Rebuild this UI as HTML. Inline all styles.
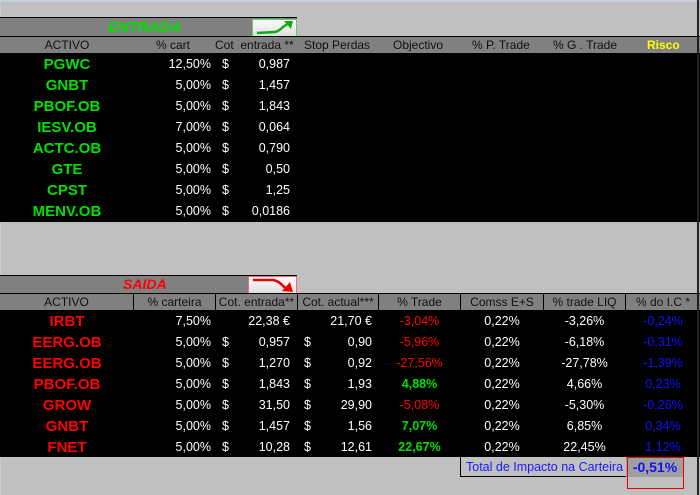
<!DOCTYPE html>
<html><head><meta charset="utf-8"><style>
*{margin:0;padding:0;box-sizing:border-box}
body{width:700px;height:495px;background:#c0c0c0;position:relative;overflow:hidden;font-family:"Liberation Sans",Arial,sans-serif;font-size:12.5px;color:#fff}
div,span{position:absolute}
.r{height:21px;left:0;width:700px;line-height:21px}
.n{font-weight:bold;font-size:15px;width:134px;text-align:center;left:0}
.g{color:#00e000}.rd{color:#f00}.b{color:#1010ff}.w{color:#fff}
.h{color:#111;font-size:12px;line-height:17px}
.R{text-align:right}.C{text-align:center}
</style></head><body>
<div style="left:0;top:0;width:700px;height:2px;background:#c8cce0"></div>
<div style="left:0;top:0;width:1px;height:495px;background:#c8cce0"></div>
<!-- ENTRADA -->
<div style="left:0;top:17px;width:297px;height:20px;background:#808080;border-top:1px solid #000"></div>
<div style="left:108px;top:18px;font-size:15px;font-weight:bold;font-style:italic;color:#00e000;line-height:19px">ENTRADA</div>
<div style="left:252px;top:19px;width:45px;height:18px;background:linear-gradient(#fff,#ddd);border:1px solid #6c6"><svg width="43" height="16" viewBox="0 0 43 16"><path d="M4 13 L22 12 Q26 11 30 7 L36 3" stroke="#1a1" stroke-width="2.5" fill="none"/><path d="M31 1 L40 1 L38 9 Z" fill="#1a1"/></svg></div>
<div style="left:0;top:36px;width:700px;height:17px;background:#808080;border-top:1px solid #000"></div>
<div class="h" style="left:0;top:37px;width:134px;text-align:center">ACTIVO</div>
<div class="h" style="left:156px;top:37px">% cart</div>
<div class="h" style="left:215px;top:37px">Cot&nbsp; entrada **</div>
<div class="h" style="left:304px;top:37px">Stop Perdas</div>
<div class="h" style="left:393px;top:37px">Objectivo</div>
<div class="h" style="left:472px;top:37px">% P. Trade</div>
<div class="h" style="left:553px;top:37px">% G . Trade</div>
<div class="h" style="left:647px;top:37px;color:#ff0;font-weight:bold">Risco</div>
<div style="left:0;top:53px;width:700px;height:169px;background:#000"></div>
<div class="r" style="top:54px"><span class="n g">PGWC</span><span class="R" style="right:489px">12,50%</span><span style="left:222px">$</span><span class="R" style="right:410px">0,987</span></div>
<div class="r" style="top:75px"><span class="n g">GNBT</span><span class="R" style="right:489px">5,00%</span><span style="left:222px">$</span><span class="R" style="right:410px">1,457</span></div>
<div class="r" style="top:96px"><span class="n g">PBOF.OB</span><span class="R" style="right:489px">5,00%</span><span style="left:222px">$</span><span class="R" style="right:410px">1,843</span></div>
<div class="r" style="top:117px"><span class="n g">IESV.OB</span><span class="R" style="right:489px">7,00%</span><span style="left:222px">$</span><span class="R" style="right:410px">0,064</span></div>
<div class="r" style="top:138px"><span class="n g">ACTC.OB</span><span class="R" style="right:489px">5,00%</span><span style="left:222px">$</span><span class="R" style="right:410px">0,790</span></div>
<div class="r" style="top:159px"><span class="n g">GTE</span><span class="R" style="right:489px">5,00%</span><span style="left:222px">$</span><span class="R" style="right:410px">0,50</span></div>
<div class="r" style="top:180px"><span class="n g">CPST</span><span class="R" style="right:489px">5,00%</span><span style="left:222px">$</span><span class="R" style="right:410px">1,25</span></div>
<div class="r" style="top:201px"><span class="n g">MENV.OB</span><span class="R" style="right:489px">5,00%</span><span style="left:222px">$</span><span class="R" style="right:410px">0,0186</span></div>
<!-- SAIDA -->
<div style="left:0;top:275px;width:297px;height:19px;background:#808080;border-top:1px solid #000"></div>
<div style="left:123px;top:276px;font-size:14px;font-weight:bold;font-style:italic;color:#f00;line-height:17px">SAIDA</div>
<div style="left:248px;top:276px;width:49px;height:18px;background:linear-gradient(#fff,#ddd);border:1px solid #f66"><svg width="47" height="16" viewBox="0 0 47 16"><path d="M4 3 L24 3 Q30 4 34 9 L38 12" stroke="#e00" stroke-width="2.5" fill="none"/><path d="M33 14 L44 15 L41 5 Z" fill="#e00"/></svg></div>
<div style="left:0;top:293px;width:700px;height:17px;background:#808080;border-top:1px solid #000"></div>
<div style="left:133px;top:293px;width:1px;height:17px;background:#000"></div>
<div style="left:215px;top:293px;width:1px;height:17px;background:#000"></div>
<div style="left:297px;top:293px;width:1px;height:17px;background:#000"></div>
<div style="left:378px;top:293px;width:1px;height:17px;background:#000"></div>
<div style="left:460px;top:293px;width:1px;height:17px;background:#000"></div>
<div style="left:543px;top:293px;width:1px;height:17px;background:#000"></div>
<div style="left:625px;top:293px;width:1px;height:17px;background:#000"></div>
<div class="h C" style="left:0;top:294px;width:133px">ACTIVO</div>
<div class="h C" style="left:134px;top:294px;width:81px">% carteira</div>
<div class="h C" style="left:216px;top:294px;width:81px">Cot. entrada**</div>
<div class="h C" style="left:298px;top:294px;width:80px">Cot. actual***</div>
<div class="h C" style="left:379px;top:294px;width:81px">% Trade</div>
<div class="h C" style="left:461px;top:294px;width:82px">Comss E+S</div>
<div class="h C" style="left:544px;top:294px;width:81px">% trade LIQ</div>
<div class="h C" style="left:626px;top:294px;width:74px">% do I.C *</div>
<div style="left:0;top:310px;width:700px;height:147px;background:#000"></div>
<div class="r" style="top:311px"><span class="n rd">IRBT</span><span class="R" style="right:489px">7,50%</span><span class="R" style="right:410px">22,38 €</span><span class="R" style="right:328px">21,70 €</span><span class="rd C" style="left:379px;width:81px">-3,04%</span><span class="C" style="left:461px;width:82px">0,22%</span><span class="C" style="left:544px;width:81px">-3,26%</span><span class="b C" style="left:626px;width:74px">-0,24%</span></div>
<div class="r" style="top:332px"><span class="n rd">EERG.OB</span><span class="R" style="right:489px">5,00%</span><span style="left:222px">$</span><span class="R" style="right:410px">0,957</span><span style="left:304px">$</span><span class="R" style="right:328px">0,90</span><span class="rd C" style="left:379px;width:81px">-5,96%</span><span class="C" style="left:461px;width:82px">0,22%</span><span class="C" style="left:544px;width:81px">-6,18%</span><span class="b C" style="left:626px;width:74px">-0,31%</span></div>
<div class="r" style="top:353px"><span class="n rd">EERG.OB</span><span class="R" style="right:489px">5,00%</span><span style="left:222px">$</span><span class="R" style="right:410px">1,270</span><span style="left:304px">$</span><span class="R" style="right:328px">0,92</span><span class="rd C" style="left:379px;width:81px">-27,56%</span><span class="C" style="left:461px;width:82px">0,22%</span><span class="C" style="left:544px;width:81px">-27,78%</span><span class="b C" style="left:626px;width:74px">-1,39%</span></div>
<div class="r" style="top:374px"><span class="n rd">PBOF.OB</span><span class="R" style="right:489px">5,00%</span><span style="left:222px">$</span><span class="R" style="right:410px">1,843</span><span style="left:304px">$</span><span class="R" style="right:328px">1,93</span><span class="g C" style="left:379px;width:81px;font-weight:bold">4,88%</span><span class="C" style="left:461px;width:82px">0,22%</span><span class="C" style="left:544px;width:81px">4,66%</span><span class="b C" style="left:626px;width:74px">0,23%</span></div>
<div class="r" style="top:395px"><span class="n rd">GROW</span><span class="R" style="right:489px">5,00%</span><span style="left:222px">$</span><span class="R" style="right:410px">31,50</span><span style="left:304px">$</span><span class="R" style="right:328px">29,90</span><span class="rd C" style="left:379px;width:81px">-5,08%</span><span class="C" style="left:461px;width:82px">0,22%</span><span class="C" style="left:544px;width:81px">-5,30%</span><span class="b C" style="left:626px;width:74px">-0,26%</span></div>
<div class="r" style="top:416px"><span class="n rd">GNBT</span><span class="R" style="right:489px">5,00%</span><span style="left:222px">$</span><span class="R" style="right:410px">1,457</span><span style="left:304px">$</span><span class="R" style="right:328px">1,56</span><span class="g C" style="left:379px;width:81px;font-weight:bold">7,07%</span><span class="C" style="left:461px;width:82px">0,22%</span><span class="C" style="left:544px;width:81px">6,85%</span><span class="b C" style="left:626px;width:74px">0,34%</span></div>
<div class="r" style="top:437px"><span class="n rd">FNET</span><span class="R" style="right:489px">5,00%</span><span style="left:222px">$</span><span class="R" style="right:410px">10,28</span><span style="left:304px">$</span><span class="R" style="right:328px">12,61</span><span class="g C" style="left:379px;width:81px;font-weight:bold">22,67%</span><span class="C" style="left:461px;width:82px">0,22%</span><span class="C" style="left:544px;width:81px">22,45%</span><span class="b C" style="left:626px;width:74px">1,12%</span></div>
<div style="left:697px;top:0;width:2px;height:495px;background:#222"></div>
<!-- Total -->
<div style="left:460px;top:457px;width:1px;height:20px;background:#000"></div>
<div style="left:460px;top:476px;width:166px;height:1px;background:#000"></div>
<div style="left:466px;top:459px;color:#1a1aff;font-size:12.5px;line-height:16px">Total de Impacto na Carteira</div>
<div style="left:626px;top:457px;width:58px;height:20px;background:#a0a0a0"></div>
<div style="left:627px;top:457px;width:57px;height:32px;border:1px solid #e00"></div>
<div style="left:626px;top:458px;width:58px;text-align:center;color:#1010ff;font-weight:bold;font-size:14px;line-height:18px">-0,51%</div>
</body></html>
